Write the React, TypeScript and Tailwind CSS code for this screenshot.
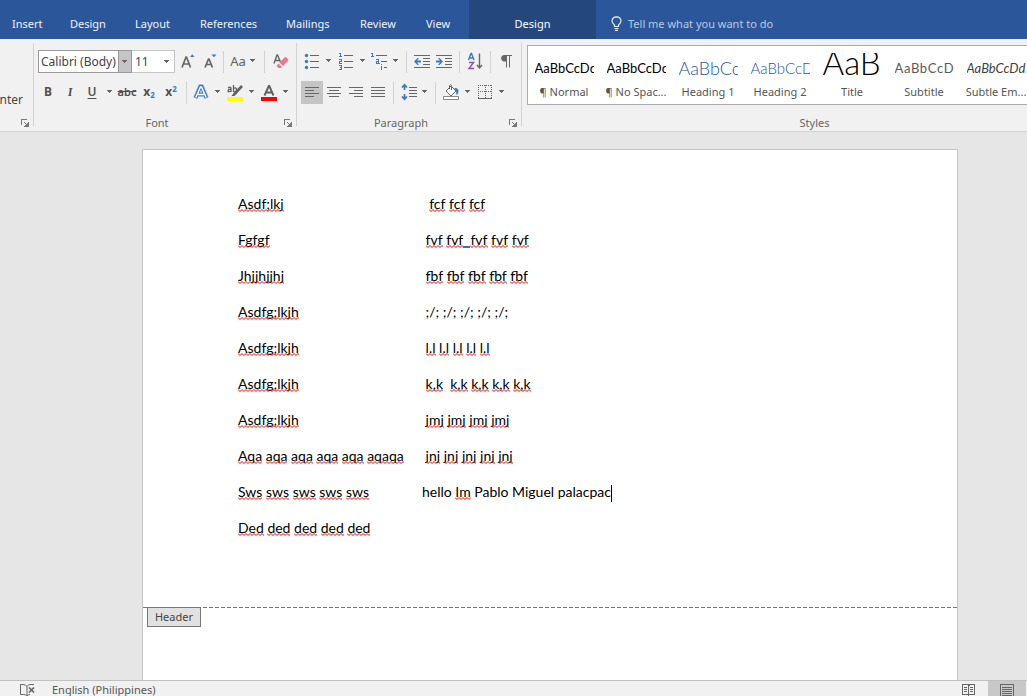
import React from "react";

type Kids = { children?: React.ReactNode };

const ZIGZAG = "M0 .5" + "l2 2l2 -2".repeat(60);

const tabs = [
  { name: "Insert", width: "w-[58px]" },
  { name: "Design", width: "w-[65px]" },
  { name: "Layout", width: "w-[65px]" },
  { name: "References", width: "w-[86px]" },
  { name: "Mailings", width: "w-[74px]" },
  { name: "Review", width: "w-[66px]" },
  { name: "View", width: "w-[55px]" },
];

const styles = [
  { name: "¶ Normal", sample: "AaBbCcDdEe", look: "pt-1 text-[13px] text-black" },
  { name: "¶ No Spac...", sample: "AaBbCcDdEe", look: "pt-1 text-[13px] text-black" },
  { name: "Heading 1", sample: "AaBbCcD", look: "pt-1 text-[18px] font-light text-[#2b579a]" },
  { name: "Heading 2", sample: "AaBbCcDd", look: "pt-1 text-[15px] font-light text-[#2b579a]" },
  { name: "Title", sample: "AaB", look: "pb-2 text-[33px] font-light text-black" },
  { name: "Subtitle", sample: "AaBbCcDd", look: "pt-1 text-[13px] tracking-wider text-[#5a5a5a]" },
  { name: "Subtle Em...", sample: "AaBbCcDdEe", look: "pt-1 text-[13px] italic text-[#404040]" },
];

// Words in square brackets are flagged by the spell checker.
const lines: [string, string][] = [
  ["[Asdf;lkj]", "  [fcf] [fcf] [fcf]"],
  ["[Fgfgf]", " [fvf] [fvf]_[fvf] [fvf] [fvf]"],
  ["[Jhjjhjjhj]", " [fbf] [fbf] [fbf] [fbf] [fbf]"],
  ["[Asdfg;lkjh]", " ;/; ;/; ;/; ;/; ;/;"],
  ["[Asdfg;lkjh]", " [l.l] [l.l] [l.l] [l.l] [l.l]"],
  ["[Asdfg;lkjh]", " [k,k]  [k,k] [k,k] [k,k] [k,k]"],
  ["[Asdfg;lkjh]", " [jmj] [jmj] [jmj] [jmj]"],
  ["[Aqa] [aqa] [aqa] [aqa] [aqa] [aqaqa]", " [jnj] [jnj] [jnj] [jnj] [jnj]"],
  ["[Sws] [sws] [sws] [sws] [sws]", "hello [Im] Pablo Miguel palacpac|"],
  ["[Ded] [ded] [ded] [ded] [ded]", ""],
];

function Spelled({ text }: { text: string }) {
  return (
    <>
      {text.split(/(\[[^\]]+\]|_|\|)/).map((part, i) => {
        if (part.startsWith("["))
          return (
            <span key={i} className="relative inline-block h-[17px] leading-[17px]">
              {part.slice(1, -1)}
              <svg aria-hidden="true" className="absolute bottom-0 left-0 h-[3px] w-full overflow-hidden" fill="none" stroke="#f00000">
                <path d={ZIGZAG} />
              </svg>
            </span>
          );
        if (part === "_") return <span key={i} className="inline-block h-[17px] border-b-2 border-[#2f6fd0] leading-[17px]">{"  "}</span>;
        if (part === "|") return <span key={i} className="inline-block h-[17px] w-px bg-black align-middle" />;
        return part;
      })}
    </>
  );
}

function Tool({ label, width = "w-[22px]", active, children }: Kids & { label: string; width?: string; active?: boolean }) {
  return (
    <button
      type="button"
      aria-label={label}
      className={`flex h-[23px] shrink-0 items-center justify-center pb-px ${width} ${active ? "bg-[#c5c5c5]" : ""}`}
    >
      {children}
    </button>
  );
}

const Caret = () => (
  <svg width="6" height="4" viewBox="0 0 6 4" shapeRendering="crispEdges" fill="#666" className="shrink-0">
    <path d="M0 0h5v1H0zM1 1h3v1H1zM2 2h1v1H2z" />
  </svg>
);

function Drop({ label, width = "w-[10px]" }: { label: string; width?: string }) {
  return (
    <Tool label={label} width={width}>
      <Caret />
    </Tool>
  );
}

const Sep = ({ gap = "mx-1" }: { gap?: string }) => <span className={`h-[22px] w-px shrink-0 bg-[#d2d2d2] ${gap}`} />;

function Icon({ children, w = 18, h = 18 }: Kids & { w?: number; h?: number }) {
  return (
    <svg width={w} height={h} viewBox={`0 0 ${w} ${h}`} fill="none" stroke="#666" className="shrink-0">
      {children}
    </svg>
  );
}

const Launcher = ({ label }: { label: string }) => (
  <button type="button" aria-label={label} className="shrink-0">
    <svg width="8" height="8" viewBox="0 0 8 8" fill="none" stroke="#777" shapeRendering="crispEdges">
      <path d="M.5 6V.5H6M3 3l3 3M7.5 3v4.5H3M6.5 4v2.5H4" />
    </svg>
  </button>
);

function GroupLabel({ name, launcher = true }: { name: string; launcher?: boolean }) {
  return (
    <div className="-mb-[5px] flex h-4 items-center pr-1">
      <span className="flex-1 pr-1 text-center text-[#666]">{name}</span>
      {launcher && <Launcher label={`${name} settings`} />}
    </div>
  );
}

function Group({ name, width, children }: Kids & { name: string; width: string }) {
  return (
    <section aria-label={name} className={`flex shrink-0 flex-col justify-between border-r border-[#d2d2d2] ${width}`}>
      <div className="flex flex-col gap-2 pt-[7px] pl-1">{children}</div>
      <GroupLabel name={name} />
    </section>
  );
}

const Lines = ({ d }: { d: string }) => (
  <Icon>
    <path d={d} shapeRendering="crispEdges" />
  </Icon>
);

function FontGroup() {
  return (
    <Group name="Font" width="w-[263px]">
      <div className="flex h-[23px] items-center">
        <input
          aria-label="Font"
          defaultValue="Calibri (Body)"
          className="h-[23px] w-[81px] border border-[#999] bg-white pl-[2px] text-[12px] text-[#444] outline-none"
        />
        <button type="button" aria-label="Font list" className="-ml-px flex h-[23px] w-[14px] items-center justify-center border border-[#999] bg-[#c5c5c5]">
          <Caret />
        </button>
        <div className="mr-[2px] flex h-[23px] w-[43px] items-center border border-l-0 border-[#c6c6c6] bg-white">
          <input aria-label="Font size" defaultValue="11" className="w-[32px] pl-[3px] text-[12px] text-[#444] outline-none" />
          <button type="button" aria-label="Font size list">
            <Caret />
          </button>
        </div>
        <Tool label="Increase font size">
          <Icon>
            <path d="M3 15.500 7 5h.5l4 10.500M4.500 12h5.500" strokeWidth="1.700" />
            <path d="M11 5l2-2.500h.500L15.500 5z" fill="#3f7ab8" stroke="none" />
          </Icon>
        </Tool>
        <Tool label="Decrease font size">
          <Icon>
            <path d="M4 15.500 7.500 7h.5l3.500 8.500M5.500 12.500h4.500" strokeWidth="1.700" />
            <path d="M10.500 2.500h5L13.200 5h-.5z" fill="#3f7ab8" stroke="none" />
          </Icon>
        </Tool>
        <Sep gap="mx-[2px]" />
        <Tool label="Change case" width="w-[34px]">
          <span className="flex items-center gap-1 text-[13px] text-[#606060]">
            Aa <Caret />
          </span>
        </Tool>
        <Sep gap="ml-1 mr-[5px]" />
        <Tool label="Clear formatting">
          <Icon>
            <path d="M2 11.500 5 3h.5l3 7M3.500 8.500h4" strokeWidth="1.400" />
            <path d="M7.500 10.500 12.500 5.500q1-.800 2 0l1.500 1.500q.800 1 0 2L11 14z" fill="#e8798c" stroke="none" />
            <path d="M6.500 11.500 10 15l-1 1H6.500L4.500 14z" fill="#e8798c" stroke="none" />
          </Icon>
        </Tool>
      </div>
      <div className="-ml-px flex h-[23px] items-center text-[12px] text-[#505050]">
        <Tool label="Bold"><b>B</b></Tool>
        <Tool label="Italic"><i className="font-serif font-bold">I</i></Tool>
        <Tool label="Underline"><span className="font-semibold underline underline-offset-2">U</span></Tool>
        <Drop label="Underline styles" width="w-[13px]" />
        <Tool label="Strikethrough"><span className="text-[11px] font-semibold line-through">abc</span></Tool>
        <Tool label="Subscript"><span className="font-bold">x<sub className="text-[8px] text-[#3f7ab8]">2</sub></span></Tool>
        <Tool label="Superscript"><span className="font-bold">x<sup className="text-[8px] text-[#3f7ab8]">2</sup></span></Tool>
        <Sep gap="ml-1 mr-[3px]" />
        <Tool label="Text effects">
          <Icon>
            <path d="M3.500 15 8.300 3.500h1.400L14.500 15M6 11.500h6" stroke="#b5d0ea" strokeWidth="5" strokeLinejoin="round" />
            <path d="M3.500 15 8.300 3.500h1.400L14.500 15M6 11.500h6" stroke="#3f7ab8" strokeWidth="3.600" />
            <path d="M3.800 14.500 8.500 4h1l4.700 10.500M6 11.500h6" stroke="#fff" strokeWidth="1.400" />
          </Icon>
        </Tool>
        <Drop label="Text effects list" width="w-[11px]" />
        <Tool label="Text highlight color" width="w-[24px]">
          <span className="flex flex-col items-center">
            <svg width="16" height="13" viewBox="0 0 16 13" fill="none" stroke="#606060">
              <path d="M1 4q2-1.500 3 0v4M4 5.500q-3-.5-3 1.300T4 7M6.500 1v7M6.500 4.500q3-1.500 3 1.300t-3 1.700" strokeWidth="1.300" />
              <path d="M15 2 8 9.500" strokeWidth="2.600" />
              <path d="M7 8.500 4.500 12h3L9.500 10" fill="#606060" stroke="none" />
            </svg>
            <span className="h-1 w-4 bg-[#ff0]" />
          </span>
        </Tool>
        <Drop label="Highlight colors" />
        <Tool label="Font color" width="w-[24px]">
          <span className="flex flex-col items-center">
            <svg width="16" height="13" viewBox="0 0 16 13" fill="none" stroke="#606060">
              <path d="M3.500 11.500 7.800 2h.500l4.200 9.500M5 8.500h6" strokeWidth="1.900" />
            </svg>
            <span className="h-1 w-4 bg-[#f00]" />
          </span>
        </Tool>
        <Drop label="Font colors" />
      </div>
    </Group>
  );
}

function ParagraphGroup() {
  return (
    <Group name="Paragraph" width="w-[225px]">
      <div className="flex h-[23px] items-center">
        <Tool label="Bullets">
          <Icon>
            <path d="M7 3.500h9M7 9.500h9M7 15.500h9" shapeRendering="crispEdges" />
            <g fill="#3f7ab8" stroke="none"><circle cx="3.500" cy="3.500" r="1.700" /><circle cx="3.500" cy="9.500" r="1.700" /><circle cx="3.500" cy="15.500" r="1.700" /></g>
          </Icon>
        </Tool>
        <Drop label="Bullet styles" width="w-[12px]" />
        <Tool label="Numbering">
          <Icon>
            <path d="M7 3.500h9M7 9.500h9M7 15.500h9" shapeRendering="crispEdges" />
            <path d="M2 1.500h1.500V5M2 4.500h3M2 7.500h2.500v2H2.500v2H5M2 13.500h2.500v4H2M2.500 15.500h2" stroke="#3f7ab8" shapeRendering="crispEdges" />
          </Icon>
        </Tool>
        <Drop label="Numbering styles" width="w-[12px]" />
        <Tool label="Multilevel list" width="w-[20px]">
          <Icon>
            <path d="M6 3.500h11M11 9.500h6M14 15.500h3" shapeRendering="crispEdges" />
            <path d="M1 1.500h1.500V5M1 4.500h3M6 7.500h2.500v4M8.500 9.500h-2v2h3M11.500 12v1M10.500 14.500h1V18" stroke="#3f7ab8" shapeRendering="crispEdges" />
          </Icon>
        </Tool>
        <Drop label="Multilevel styles" width="w-[13px]" />
        <Sep />
        <Tool label="Decrease indent">
          <Icon>
            <path d="M1 3.500h16M10 6.500h7M10 9.500h7M10 12.500h7M1 15.500h16" shapeRendering="crispEdges" />
            <path d="M1 9.500 4.500 6H6L4 8.500h4v2H4L6 13H4.500z" fill="#3f7ab8" stroke="none" />
          </Icon>
        </Tool>
        <Tool label="Increase indent">
          <Icon>
            <path d="M1 3.500h16M10 6.500h7M10 9.500h7M10 12.500h7M1 15.500h16" shapeRendering="crispEdges" />
            <path d="M8 9.500 4.500 6H3L5 8.500H1v2h4L3 13h1.500z" fill="#3f7ab8" stroke="none" />
          </Icon>
        </Tool>
        <Sep />
        <Tool label="Sort">
          <Icon>
            <path d="M2.500 8 5 1.500h.5L8 8M3.500 6h3.500" stroke="#3f7ab8" strokeWidth="1.400" />
            <path d="M3 10.500h4.500L3 16.500h5" stroke="#8a4fb0" strokeWidth="1.400" />
            <path d="M13.500 1.500v14M11 13l2.500 3 2.500-3" strokeWidth="1.400" />
          </Icon>
        </Tool>
        <Sep />
        <Tool label="Show formatting marks">
          <Icon>
            <path d="M9.500 3v12.500M12.500 3v12.500M8 3.500h7" />
            <path d="M10 3H7.500q-3.300.300-3.300 3.200T7.500 9.500H10z" fill="#666" stroke="none" />
          </Icon>
        </Tool>
      </div>
      <div className="flex h-[23px] items-center">
        <Tool label="Align left" active><Lines d="M2 4.500h14M2 7.500h9M2 10.500h14M2 13.500h9" /></Tool>
        <Tool label="Center"><Lines d="M2 4.500h14M4 7.500h10M2 10.500h14M4 13.500h10" /></Tool>
        <Tool label="Align right"><Lines d="M2 4.500h14M7 7.500h9M2 10.500h14M7 13.500h9" /></Tool>
        <Tool label="Justify"><Lines d="M2 4.500h14M2 7.500h14M2 10.500h14M2 13.500h14" /></Tool>
        <Sep />
        <Tool label="Line spacing">
          <Icon>
            <path d="M9 4.500h8M9 7.500h8M9 10.500h8M9 13.500h8" shapeRendering="crispEdges" />
            <path d="M4.500 2v5M2 4.500l2.500-2.700L7 4.500M4.500 11v5M2 13.500l2.500 2.700L7 13.500" stroke="#3f7ab8" strokeWidth="1.700" />
          </Icon>
        </Tool>
        <Drop label="Spacing options" />
        <Sep gap="ml-[5px] mr-1" />
        <Tool label="Shading">
          <Icon>
            <path d="M1.500 13.500h15v3h-15z" fill="#fff" stroke="#888" />
            <path d="M9 3 14 8l-5 5-5-5z" fill="#fff" />
            <path d="M7.500 6V2.500q1-1.500 2 0V7" />
            <path d="M12.500 5q4-.500 4 3.500-.300 3-2 3.500 0-3-1-4z" fill="#3f7ab8" stroke="none" />
          </Icon>
        </Tool>
        <Drop label="Shading colors" width="w-[12px]" />
        <Tool label="Borders">
          <Icon>
            <path d="M2.500 2v13M15.500 2v13M9.500 2v13M2 2.500h14M2 8.500h14" strokeDasharray="1 1" shapeRendering="crispEdges" />
            <path d="M2 15.500h14" shapeRendering="crispEdges" />
          </Icon>
        </Tool>
        <Drop label="Border styles" width="w-[12px]" />
      </div>
    </Group>
  );
}

export default function App() {
  return (
    <div className="flex h-screen flex-col overflow-hidden bg-[#e6e6e6] font-['Noto_Sans',sans-serif] text-[11px] leading-4">
      <nav className="flex h-[39px] shrink-0 bg-[#2b579a] pt-2 text-[#f0f4fa]">
        {tabs.map((t) => (
          <button key={t.name} type="button" className={`shrink-0 pl-3 text-left ${t.width}`}>
            {t.name}
          </button>
        ))}
        <button type="button" className="-mt-2 w-[127px] shrink-0 bg-[#24477d] pt-2 text-center text-white">
          Design
        </button>
        <label className="flex flex-1 items-center gap-[6px] pl-[15px]">
          <svg width="11" height="15" viewBox="0 0 11 15" fill="none" stroke="#e6edf7" strokeWidth="1.200">
            <path d="M3.500 10.500V9Q1 7.200 1 4.800 1.300 1 5.500.800 9.700 1 10 4.800 10 7.200 7.500 9v1.500zM3.500 12.500h4M4 14.300h3" />
          </svg>
          <input
            aria-label="Tell me what you want to do"
            placeholder="Tell me what you want to do"
            className="w-52 bg-transparent outline-none placeholder:text-[#b9c9e3]"
          />
        </label>
      </nav>

      <div className="flex h-[93px] shrink-0 overflow-hidden border-b border-[#d2d2d2] bg-[#f1f1f1] pt-1 pb-[5px]">
        <section aria-label="Clipboard" className="flex w-[34px] shrink-0 flex-col justify-between border-r border-[#d2d2d2]">
          <span className="flex justify-end overflow-hidden pt-[49px] pr-[10px] text-[12px] whitespace-nowrap text-[#444]">Format Painter</span>
          <span className="-mb-[5px] flex h-4 items-center justify-end pr-1"><Launcher label="Clipboard settings" /></span>
        </section>
        <FontGroup />
        <ParagraphGroup />
        <section aria-label="Styles" className="flex min-w-[588px] flex-1 shrink-0 flex-col justify-between pl-[5px]">
          <div className="mt-[2px] flex h-[60px] border border-[#ababab] bg-white">
            {styles.map((s) => (
              <button key={s.name} type="button" className="flex w-[72px] shrink-0 flex-col items-center">
                <span className={`mt-[7px] mb-[5px] flex h-[26px] w-[59px] items-center overflow-hidden font-['Lato',sans-serif] leading-none whitespace-nowrap ${s.look}`}>
                  {s.sample}
                </span>
                <span className="whitespace-nowrap text-[#555]">{s.name}</span>
              </button>
            ))}
          </div>
          <GroupLabel name="Styles" launcher={false} />
        </section>
      </div>

      <main className="min-h-0 flex-1 overflow-hidden pt-[17px] pl-[142px]">
        <article className="flex min-h-full w-[816px] flex-col border border-b-0 border-[#c6c6c6] bg-white">
          <div className="h-[457px] pt-9 pl-[95px] font-['Lato',sans-serif] text-[14px] leading-9 text-black">
            {lines.map(([left, right], i) => (
              <p key={i} className="grid h-9 grid-cols-[184px_1fr] whitespace-pre">
                <span><Spelled text={left} /></span>
                <span><Spelled text={right} /></span>
              </p>
            ))}
          </div>
          <div className="h-px bg-[repeating-linear-gradient(90deg,#777_0_4px,transparent_4px_6px)]" />
          <div className="-mt-px ml-1 flex h-5 w-[54px] items-center justify-center border border-[#777] bg-[#e1e1e1] text-[#444]">
            Header
          </div>
        </article>
      </main>

      <footer className="flex h-4 shrink-0 items-start overflow-hidden border-t border-[#c0c0c0] bg-[#f1f1f1] text-[#555]">
        <button type="button" aria-label="Proofing" className="mt-[3px] ml-5">
          <svg width="15" height="12" viewBox="0 0 15 12" fill="none" stroke="#666">
            <path d="M7 11.500V2.500Q5.500.500 3 .500H.500v10h3Q6 10.500 7 12 8 10.500 10 10.500M7 2.500Q8 .700 10 .500h4" />
            <path d="M9 3.500l5 5M14 3.500l-5 5" strokeWidth="1.700" />
          </svg>
        </button>
        <button type="button" className="mt-px ml-[17px] whitespace-nowrap">English (Philippines)</button>
        <span className="flex-1" />
        <button type="button" aria-label="Read mode" className="mt-[3px] mr-[13px]">
          <svg width="13" height="12" viewBox="0 0 13 12" fill="none" stroke="#666" shapeRendering="crispEdges">
            <path d="M6.500 12V2M6 1.500V.500H.500v10H6M7 1.500V.500h5.500v10H7M2 3.500h3M2 5.500h3M2 7.500h3M8 3.500h3M8 5.500h3M8 7.500h3" />
          </svg>
        </button>
        <button type="button" aria-label="Print layout" className="mr-px flex h-5 w-[38px] justify-center bg-[#c8c8c8] pt-[3px]">
          <svg width="14" height="14" viewBox="0 0 14 14" fill="none" stroke="#666" shapeRendering="crispEdges">
            <path d="M.500 14V.500h13V14M2 3.500h10M2 5.500h10M2 7.500h10M2 9.500h10M2 11.500h10" />
          </svg>
        </button>
      </footer>
    </div>
  );
}
